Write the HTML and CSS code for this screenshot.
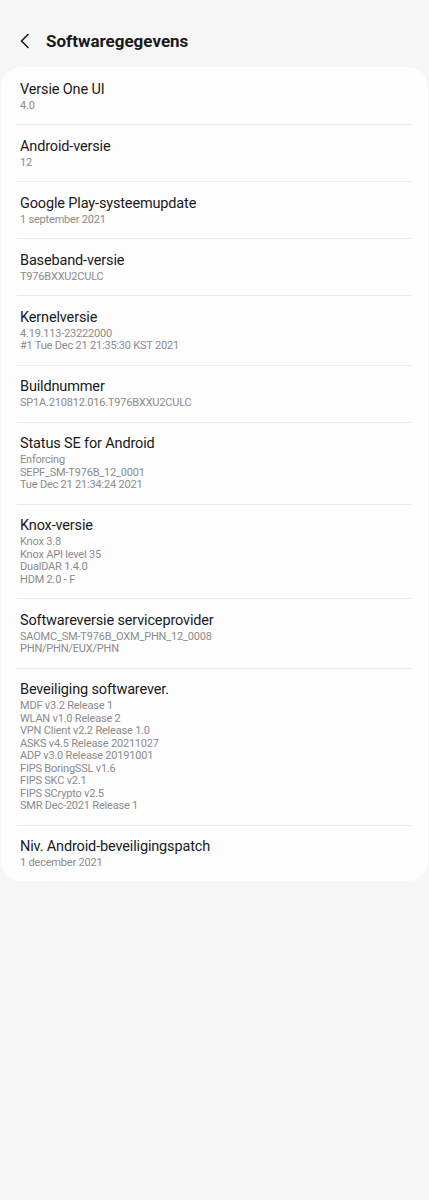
FILE: index.html
```html
<!DOCTYPE html>
<html lang="nl">
<head>
  <meta charset="UTF-8">
  <title>Softwaregegevens</title>
  <link rel="stylesheet" href="styles.css">
</head>
<body>
  <div class="header">
    <svg class="back" width="12" height="16" viewBox="0 0 12 16">
      <path d="M9 1.5 L2.5 8 L9 14.5" fill="none" stroke="#1a1a1a" stroke-width="1.6" stroke-linecap="round" stroke-linejoin="round"/>
    </svg>
    <h1 class="title">Softwaregegevens</h1>
  </div>

  <div class="card">
    <div class="item">
      <div class="label">Versie One UI</div>
      <div class="sub">4.0</div>
    </div>
    <div class="item">
      <div class="label">Android-versie</div>
      <div class="sub">12</div>
    </div>
    <div class="item">
      <div class="label">Google Play-systeemupdate</div>
      <div class="sub">1 september 2021</div>
    </div>
    <div class="item">
      <div class="label">Baseband-versie</div>
      <div class="sub">T976BXXU2CULC</div>
    </div>
    <div class="item">
      <div class="label">Kernelversie</div>
      <div class="sub">4.19.113-23222000</div>
      <div class="sub">#1 Tue Dec 21 21:35:30 KST 2021</div>
    </div>
    <div class="item">
      <div class="label">Buildnummer</div>
      <div class="sub">SP1A.210812.016.T976BXXU2CULC</div>
    </div>
    <div class="item">
      <div class="label">Status SE for Android</div>
      <div class="sub">Enforcing</div>
      <div class="sub">SEPF_SM-T976B_12_0001</div>
      <div class="sub">Tue Dec 21 21:34:24 2021</div>
    </div>
    <div class="item">
      <div class="label">Knox-versie</div>
      <div class="sub">Knox 3.8</div>
      <div class="sub">Knox API level 35</div>
      <div class="sub">DualDAR 1.4.0</div>
      <div class="sub">HDM 2.0 - F</div>
    </div>
    <div class="item">
      <div class="label">Softwareversie serviceprovider</div>
      <div class="sub">SAOMC_SM-T976B_OXM_PHN_12_0008</div>
      <div class="sub">PHN/PHN/EUX/PHN</div>
    </div>
    <div class="item">
      <div class="label">Beveiliging softwarever.</div>
      <div class="sub">MDF v3.2 Release 1</div>
      <div class="sub">WLAN v1.0 Release 2</div>
      <div class="sub">VPN Client v2.2 Release 1.0</div>
      <div class="sub">ASKS v4.5 Release 20211027</div>
      <div class="sub">ADP v3.0 Release 20191001</div>
      <div class="sub">FIPS BoringSSL v1.6</div>
      <div class="sub">FIPS SKC v2.1</div>
      <div class="sub">FIPS SCrypto v2.5</div>
      <div class="sub">SMR Dec-2021 Release 1</div>
    </div>
    <div class="item">
      <div class="label">Niv. Android-beveiligingspatch</div>
      <div class="sub">1 december 2021</div>
    </div>
  </div>
</body>
</html>
```

FILE: styles.css
```css
body {
  margin: 0;
  background: #f6f6f6;
  font-family: Roboto, "Noto Sans", sans-serif;
  color: #1a1a1a;
}

.header {
  display: flex;
  align-items: center;
  height: 67px;
  padding: 14px 0 0 19px;
  box-sizing: border-box;
}

.back {
  display: block;
}

.title {
  margin: 0 0 0 15px;
  font-size: 17px;
  font-weight: 700;
}

.card {
  background: #fdfdfd;
  margin: 0 1px;
  border-radius: 20px;
  padding: 1px 0 0;
}

.item {
  margin: 0 16px;
  padding: 11.5px 3px 12px;
  border-top: 1px solid #ececec;
}

.item:first-child {
  border-top: none;
}

.item:last-child {
  padding-bottom: 11px;
}

.label {
  font-size: 14.5px;
  line-height: 20px;
  letter-spacing: -0.15px;
}

.sub {
  font-size: 11px;
  line-height: 12.5px;
  letter-spacing: -0.2px;
  color: #8c8c8c;
}
```
